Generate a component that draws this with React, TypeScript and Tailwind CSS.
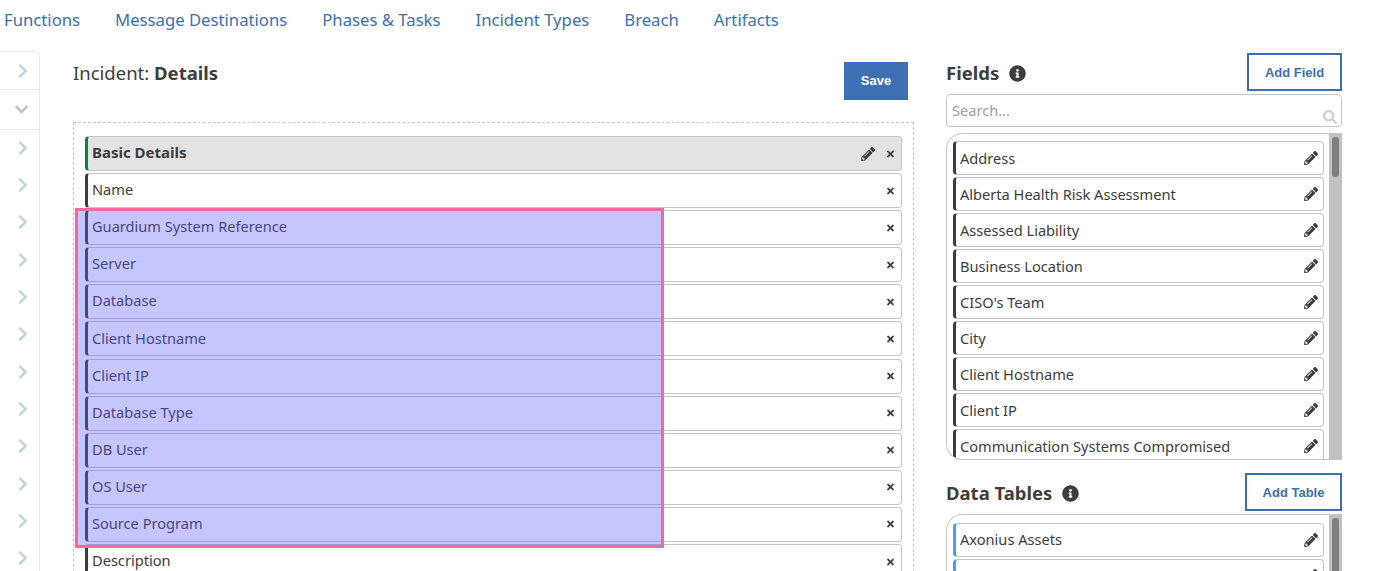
import { FaChevronDown, FaChevronRight, FaInfoCircle, FaPencilAlt, FaSearch, FaTimes } from 'react-icons/fa';

const NAV_LINKS = ['Functions', 'Message Destinations', 'Phases & Tasks', 'Incident Types', 'Breach', 'Artifacts'];

const LAYOUT_ROWS = [
  'Name',
  'Guardium System Reference',
  'Server',
  'Database',
  'Client Hostname',
  'Client IP',
  'Database Type',
  'DB User',
  'OS User',
  'Source Program',
  'Description',
];

const FIELDS = [
  'Address',
  'Alberta Health Risk Assessment',
  'Assessed Liability',
  'Business Location',
  "CISO's Team",
  'City',
  'Client Hostname',
  'Client IP',
  'Communication Systems Compromised',
];

const TABLES = ['Axonius Assets', ''];

function SidebarRow() {
  return (
    <div className="flex h-[37.35px] shrink-0 items-center justify-end pr-[8px]">
      <FaChevronRight className="h-[16px] w-[16px] text-[#c0d0e6]" />
    </div>
  );
}

function Sidebar() {
  return (
    <div className="h-[520px] w-[40px] shrink-0 overflow-hidden rounded-tr-[6px] border-t border-r border-[#e8e8e8]">
      <div className="flex h-[38px] items-center justify-end border-b border-[#e8e8e8] pr-[8px]">
        <FaChevronRight className="h-[16px] w-[16px] text-[#c0d0e6]" />
      </div>
      <div className="flex h-[40px] items-center justify-end border-b border-[#e8e8e8] pr-[10px]">
        <FaChevronDown className="h-[15px] w-[15px] text-[#c0c0c0]" />
      </div>
      <div className="-mt-[1px]">
        {Array.from({ length: 12 }, (_, i) => (
          <SidebarRow key={i} />
        ))}
      </div>
    </div>
  );
}

function LayoutRow({ label, header }: { label: string; header?: boolean }) {
  return (
    <div
      className={`mb-[2.1px] flex h-[35px] items-center rounded-[4px] border border-[#c6c6c6] border-l-[3px] pl-[4px] pr-[6px] ${
        header ? 'border-l-[#00884b] bg-[#e3e3e3] text-[15px] font-bold' : 'border-l-[#3d3d3d] bg-white'
      }`}
    >
      <span className={`flex-1 truncate ${header ? 'pb-[2px]' : 'pb-[1px]'}`}>{label}</span>
      {header && <FaPencilAlt className="mr-[11px] h-[14px] w-[14px] text-[#3d3d3d]" />}
      <FaTimes className="h-[10px] w-[9px] text-[#3d3d3d]" />
    </div>
  );
}

function PaletteItem({ label, color }: { label: string; color: 'dark' | 'blue' }) {
  return (
    <div
      className={`mb-[2px] flex h-[34px] shrink-0 items-center rounded-[4px] border border-[#c6c6c6] border-l-[3px] pl-[4px] pr-[5px] ${
        color === 'blue' ? 'border-l-[#4b9bff]' : 'border-l-[#3d3d3d]'
      }`}
    >
      <span className="flex-1 truncate pt-[1px]">{label}</span>
      <FaPencilAlt className="h-[14px] w-[14px] text-[#3d3d3d]" />
    </div>
  );
}

function PaletteHeader({ title, action, buttonWidth }: { title: string; action: string; buttonWidth: string }) {
  return (
    <div className="flex h-[38px] items-center justify-between">
      <div className="flex items-center gap-[10px] pt-[2px] text-[18.5px] font-bold">
        {title}
        <FaInfoCircle className="h-[17px] w-[17px]" />
      </div>
      <button
        className={`h-[38px] border-2 border-[#3d70b2] pt-[2px] font-['Liberation_Sans',sans-serif] text-[13px] font-bold text-[#3d70b2] ${buttonWidth}`}
      >
        {action}
      </button>
    </div>
  );
}

function App() {
  return (
    <div className="h-[571px] overflow-hidden bg-white font-['Noto_Sans',sans-serif] text-[14.6px] text-[#3d3d3d]">
      <nav className="flex h-[51px] items-start gap-[35px] pl-[4px] pt-[7px] text-[16.7px] text-[#3d70b2]">
        {NAV_LINKS.map((link) => (
          <a key={link}>{link}</a>
        ))}
      </nav>

      <div className="flex">
        <Sidebar />

        <div className="ml-[33px] w-[841px] shrink-0">
          <div className="flex h-[71px] items-start justify-between pr-[6px] pt-[11px]">
            <h1 className="-mt-[1px] text-[18.5px] leading-[24px]">
              Incident: <span className="font-bold">Details</span>
            </h1>
            <button className="h-[38px] w-[64px] bg-[#3d70b2] font-['Liberation_Sans',sans-serif] text-[13px] font-bold text-white">
              Save
            </button>
          </div>

          <div className="relative h-[500px] border border-dashed border-[#c6c6c6] px-[11px] pt-[13px]">
            <LayoutRow label="Basic Details" header />
            {LAYOUT_ROWS.map((row) => (
              <LayoutRow key={row} label={row} />
            ))}
            {/* Drag selection marquee */}
            <div className="absolute left-[1px] top-[85px] h-[340px] w-[589px] border-[3px] border-[#f0699a] bg-[#5a5aff]/35" />
          </div>
        </div>

        <div className="ml-[32px] w-[396px] shrink-0 pt-[2px]">
          <PaletteHeader title="Fields" action="Add Field" buttonWidth="w-[95px]" />
          <div className="relative mt-[3px] h-[33px] rounded-[4px] border border-[#c6c6c6] pl-[5px] pt-[5px] text-[#a0a0a0]">
            Search...
            <FaSearch className="absolute bottom-[2px] right-[4px] h-[14px] w-[14px] text-[#d0d0d0]" />
          </div>

          <div className="mt-[6px] flex h-[327px] overflow-hidden rounded-l-[16px] border-y border-l border-[#c6c6c6]">
            <div className="flex-1 pl-[6px] pr-[5px] pt-[7px]">
              {FIELDS.map((field) => (
                <PaletteItem key={field} label={field} color="dark" />
              ))}
            </div>
            <div className="w-[13px] shrink-0 bg-[#c1c2c1] px-[3px] pt-[3px]">
              <div className="h-[40px] rounded-[3px] bg-[#7f7f7f]" />
            </div>
          </div>

          <div className="mt-[13px]">
            <PaletteHeader title="Data Tables" action="Add Table" buttonWidth="w-[97px]" />
          </div>
          <div className="mt-[3px] flex h-[100px] overflow-hidden rounded-l-[16px] border-y border-l border-[#c6c6c6]">
            <div className="flex-1 pl-[6px] pr-[5px] pt-[7.6px]">
              {TABLES.map((table, i) => (
                <PaletteItem key={i} label={table} color="blue" />
              ))}
            </div>
            <div className="w-[13px] shrink-0 bg-[#c1c2c1] px-[3px] pt-[3px]">
              <div className="h-[60px] rounded-[3px] bg-[#7f7f7f]" />
            </div>
          </div>
        </div>
      </div>
    </div>
  );
}

export default App;
